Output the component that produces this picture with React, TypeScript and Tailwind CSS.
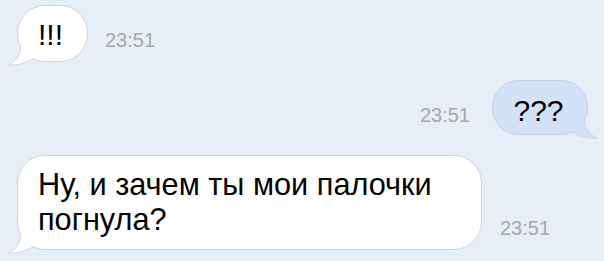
import React from "react";

function Tail({ fill, flip }: { fill: string; flip?: boolean }) {
  return (
    <svg
      width="30"
      height="25"
      viewBox="0 0 30 25"
      className={`absolute bottom-[-5px] ${flip ? "right-[-10px] scale-x-[-1]" : "left-[-10px]"}`}
    >
      <path d="M12.7 4 C13 15 7 21 0 24 C8 25 18 22 26 17.3 L30 0 Z" fill={fill} />
      <path
        d="M12.7 4 C13 15 7 21 0 24 C8 25 18 22 26 17.3"
        fill="none"
        stroke="#cdd4dd"
        strokeWidth="1"
      />
    </svg>
  );
}

function Time({ className }: { className?: string }) {
  return (
    <span className={`text-[20px] leading-[20px] text-[#a4a8af] ${className ?? ""}`}>23:51</span>
  );
}

export default function App() {
  return (
    <div
      className="w-[604px] h-[261px] overflow-hidden bg-[#e8eef7] flex flex-col"
      style={{ fontFamily: '"Liberation Sans", Arial, sans-serif' }}
    >
      {/* incoming */}
      <div className="flex items-start pl-[17px] pt-[5px]">
        <div className="relative w-[71px] h-[57px] rounded-[28px] bg-white border border-[#cdd4dd] flex items-center justify-center">
          <span className="text-[30px] leading-none text-black -ml-[4px] mt-[2px]">!!!</span>
          <Tail fill="#ffffff" />
        </div>
        <Time className="ml-[17px] mt-[25px]" />
      </div>

      {/* outgoing */}
      <div className="flex items-start justify-end pr-[16px] mt-[18px]">
        <Time className="mr-[22px] mt-[25px]" />
        <div className="relative w-[96px] h-[55px] rounded-[27px] bg-[#d3e2f6] border border-[#c3d0df] flex items-center justify-center">
          <span className="text-[30px] leading-none text-black -ml-[3px] mt-[6px]">???</span>
          <Tail fill="#d3e2f6" flip />
        </div>
      </div>

      {/* incoming, long */}
      <div className="flex items-end pl-[17px] mt-[20px]">
        <div className="relative w-[465px] h-[95px] rounded-[28px] bg-white border border-[#cdd4dd] pl-[20px] pt-[11px]">
          <p className="text-[30.7px] leading-[35px] text-black">
            Ну, и зачем ты мои палочки погнула?
          </p>
          <Tail fill="#ffffff" />
        </div>
        <Time className="ml-[18px] mb-[12px]" />
      </div>
    </div>
  );
}
